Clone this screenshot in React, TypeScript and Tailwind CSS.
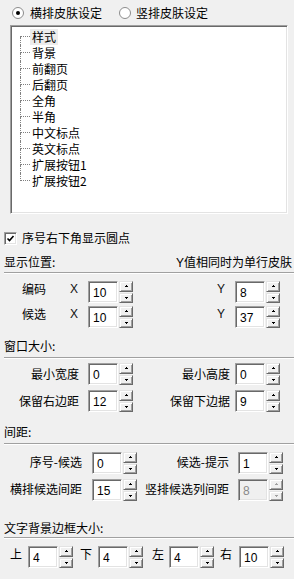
import React from "react";

const treeItems = ["样式", "背景", "前翻页", "后翻页", "全角", "半角", "中文标点", "英文标点", "扩展按钮1", "扩展按钮2"];

function Arrow({ up, disabled }: { up?: boolean; disabled?: boolean }) {
  const c = disabled ? "#a0a0a0" : "#000";
  return (
    <svg width="5" height="3" viewBox="0 0 5 3" shapeRendering="crispEdges">
      {up ? (
        <>
          <rect x="2" y="0" width="1" height="1" fill={c} />
          <rect x="1" y="1" width="3" height="1" fill={c} />
        </>
      ) : (
        <>
          <rect x="1" y="1" width="3" height="1" fill={c} />
          <rect x="2" y="2" width="1" height="1" fill={c} />
        </>
      )}
    </svg>
  );
}

function SpinBtn({ up, disabled }: { up?: boolean; disabled?: boolean }) {
  return (
    <div className="flex-1 flex items-center justify-center bg-[#f0f0f0] border border-t-[#e3e3e3] border-l-[#e3e3e3] border-r-[#696969] border-b-[#696969] shadow-[inset_1px_1px_0_#fff,inset_-1px_-1px_0_#a0a0a0]">
      <Arrow up={up} disabled={disabled} />
    </div>
  );
}

function SpinBox({ value, disabled }: { value: string; disabled?: boolean }) {
  return (
    <div className="flex h-[22px] shrink-0">
      <div
        className={`w-[30px] h-full flex items-center pl-[4px] pt-[1px] border border-t-[#a0a0a0] border-l-[#a0a0a0] border-r-white border-b-white shadow-[inset_1px_1px_0_#696969,inset_-1px_-1px_0_#e3e3e3] font-['Liberation_Sans',sans-serif] text-[12px] ${
          disabled ? "bg-[#f0f0f0] text-[#8a8a8a]" : "bg-white text-black"
        }`}
      >
        {value}
      </div>
      <div className="ml-[1px] w-[14px] flex flex-col gap-[1px]">
        <SpinBtn up disabled={disabled} />
        <SpinBtn disabled={disabled} />
      </div>
    </div>
  );
}

function Separator() {
  return <div className="ml-[4px] h-[2px] border-t border-t-[#a0a0a0] border-b border-b-white" />;
}

function Radio({ checked }: { checked?: boolean }) {
  return (
    <div className="w-[12px] h-[12px] rounded-full bg-white border border-[#8c8c8c] flex items-center justify-center shrink-0">
      {checked && <div className="w-[4px] h-[4px] rounded-full bg-black" />}
    </div>
  );
}

export default function App() {
  return (
    <div className="w-[294px] h-[579px] bg-[#f0f0f0] text-black text-[12px] leading-[16px] font-['Noto_Sans_CJK_SC',sans-serif] overflow-hidden">
      {/* skin orientation */}
      <div className="flex items-center h-[25px] pl-[12px]">
        <Radio checked />
        <span className="ml-[6px]">横排皮肤设定</span>
        <div className="ml-[17px]">
          <Radio />
        </div>
        <span className="ml-[5px]">竖排皮肤设定</span>
      </div>

      {/* tree */}
      <div className="mx-[10px] w-[278px] h-[189px] bg-white border border-t-[#a0a0a0] border-l-[#a0a0a0] border-r-white border-b-white shadow-[inset_1px_1px_0_#696969,inset_-1px_-1px_0_#e3e3e3] pt-[3px] pl-[9px]">
        {treeItems.map((item, i) => {
          const first = i === 0;
          const last = i === treeItems.length - 1;
          return (
            <div key={item} className="flex h-[16px]">
              <div className="w-[10px] flex flex-col shrink-0">
                <div className={`h-[8px] border-b border-dotted border-b-[#808080] ${first ? "" : "border-l border-l-[#808080]"}`} />
                <div className={`h-[8px] ${last ? "" : "border-l border-dotted border-l-[#808080]"}`} />
              </div>
              <span className={`px-[2px] ${first ? "bg-[#ececec]" : ""}`}>{item}</span>
            </div>
          );
        })}
      </div>

      {/* checkbox */}
      <div className="flex items-center h-[16px] mt-[16px] pl-[4px]">
        <div className="w-[13px] h-[13px] bg-white border border-t-[#a0a0a0] border-l-[#a0a0a0] border-r-white border-b-white shadow-[inset_1px_1px_0_#696969,inset_-1px_-1px_0_#e3e3e3] flex items-center justify-center">
          <svg width="9" height="9" viewBox="0 0 9 9">
            <polyline points="1.5,4.5 3.5,6.5 7.5,2" fill="none" stroke="#000" strokeWidth="1.6" />
          </svg>
        </div>
        <span className="ml-[5px]">序号右下角显示圆点</span>
      </div>

      {/* 显示位置 */}
      <div className="flex justify-between h-[16px] mt-[8px] pl-[4px] pr-[2px]">
        <span>显示位置:</span>
        <span>
          <span className="font-['Liberation_Sans',sans-serif]">Y</span>值相同时为单行皮肤
        </span>
      </div>
      <div className="mt-[2px]">
        <Separator />
      </div>
      {[
        ["编码", "10", "8"],
        ["候选", "10", "37"],
      ].map(([label, x, y], i) => (
        <div key={label} className={`flex items-center h-[22px] pl-[22px] ${i === 0 ? "mt-[7px]" : "mt-[3px]"}`}>
          <span className="w-[48px] -mt-[6px]">{label}</span>
          <span className="w-[18px] -mt-[6px] font-['Liberation_Sans',sans-serif] text-[#111]">X</span>
          <SpinBox value={x} />
          <span className="w-[84px]" />
          <span className="w-[18px] -mt-[6px] font-['Liberation_Sans',sans-serif] text-[#111]">Y</span>
          <SpinBox value={y} />
        </div>
      ))}

      {/* 窗口大小 */}
      <div className="h-[16px] mt-[10px] pl-[4px]">窗口大小:</div>
      <div className="mt-[3px]">
        <Separator />
      </div>
      {[
        ["最小宽度", "0", "最小高度", "0"],
        ["保留右边距", "12", "保留下边据", "9"],
      ].map(([l1, v1, l2, v2], i) => (
        <div key={l1} className={`flex items-center h-[22px] ${i === 0 ? "mt-[4px]" : "mt-[5px]"}`}>
          <span className="w-[79px] text-right">{l1}</span>
          <div className="ml-[9px]">
            <SpinBox value={v1} />
          </div>
          <span className="w-[97px] text-right">{l2}</span>
          <div className="ml-[5px]">
            <SpinBox value={v2} />
          </div>
        </div>
      ))}

      {/* 间距 */}
      <div className="h-[16px] mt-[12px] pl-[4px]">间距:</div>
      <div className="mt-[3px]">
        <Separator />
      </div>
      {[
        ["序号-候选", "0", "候选-提示", "1", false],
        ["横排候选间距", "15", "竖排候选列间距", "8", true],
      ].map(([l1, v1, l2, v2, dis], i) => (
        <div key={l1 as string} className={`flex items-center h-[22px] ${i === 0 ? "mt-[7px]" : "mt-[5px]"}`}>
          <span className="w-[82px] text-right -mt-[3px]">{l1}</span>
          <div className="ml-[10px]">
            <SpinBox value={v1 as string} />
          </div>
          <span className="w-[92px] text-right -mt-[3px]">{l2}</span>
          <div className="ml-[9px]">
            <SpinBox value={v2 as string} disabled={dis as boolean} />
          </div>
        </div>
      ))}

      {/* 文字背景边框大小 */}
      <div className="h-[16px] mt-[19px] pl-[4px]">文字背景边框大小:</div>
      <div className="mt-[1px]">
        <Separator />
      </div>
      <div className="flex items-center h-[22px] mt-[7px] pl-[10px]">
        <span className="-mt-[6px]">上</span>
        <div className="ml-[6px]">
          <SpinBox value="4" />
        </div>
        <span className="ml-[7px] -mt-[6px]">下</span>
        <div className="ml-[6px]">
          <SpinBox value="4" />
        </div>
        <span className="ml-[9px] -mt-[6px]">左</span>
        <div className="ml-[5px]">
          <SpinBox value="4" />
        </div>
        <span className="ml-[6px] -mt-[6px]">右</span>
        <div className="ml-[7px]">
          <SpinBox value="10" />
        </div>
      </div>
    </div>
  );
}
